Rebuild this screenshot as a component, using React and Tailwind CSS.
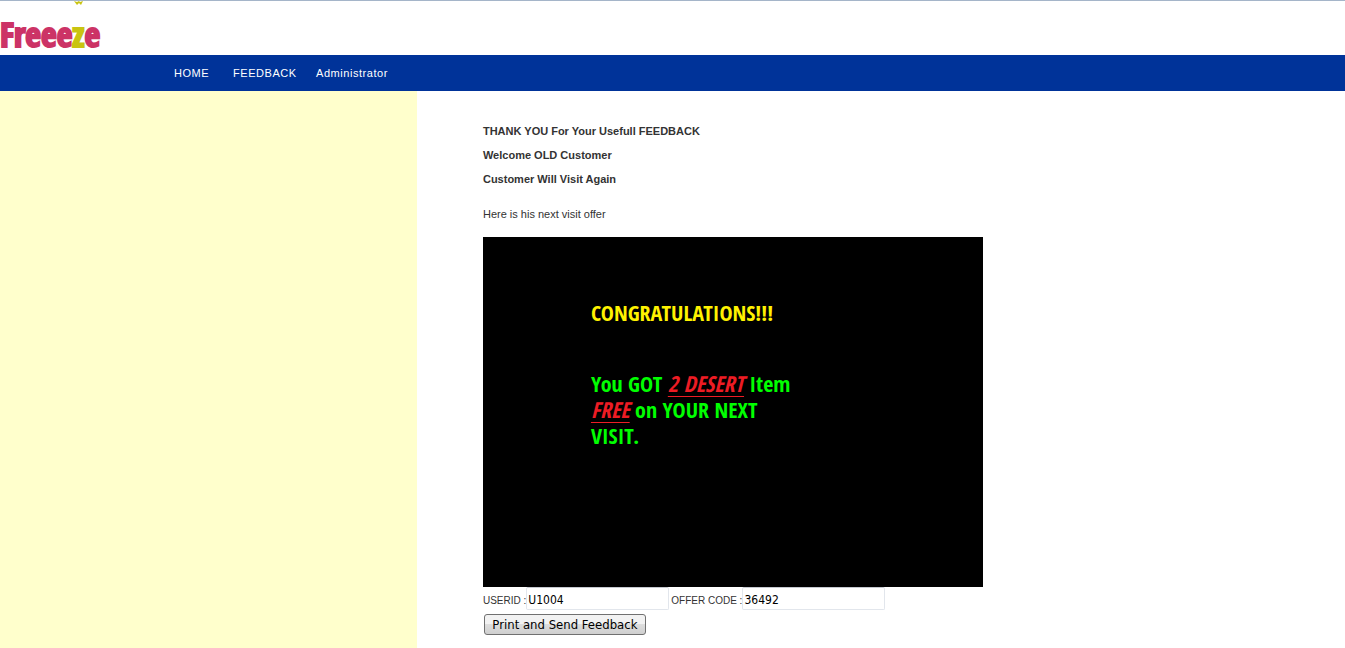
const navItems = [
  { label: 'HOME', className: 'w-[59px]' },
  { label: 'FEEDBACK', className: 'w-[83px]' },
  { label: 'Administrator', className: '' },
];

function Logo() {
  return (
    <svg width="110" height="54" viewBox="0 0 110 54" role="img" aria-label="Freeeze" className="block overflow-visible">
      <text
        x="0"
        y="46"
        fontFamily="'Open Sans Condensed', 'Roboto Condensed', sans-serif"
        fontWeight="700"
        fontSize="34"
        fill="#cc3366"
        stroke="#cc3366"
        strokeWidth="2"
      >
        Freee<tspan fill="#c9c411" stroke="#c9c411">z</tspan>e
      </text>
      <path d="M74 0l3 4 2-2 2 2 2-4-3 1-1-1-2 1z" fill="#c9c411" />
    </svg>
  );
}

function OfferBanner() {
  return (
    <section className="h-[350px] w-[500px] bg-black pl-[108px] pt-[62px] font-['Open_Sans_Condensed','Roboto_Condensed',sans-serif] text-[22px] font-bold leading-[26px] text-[#00ff00]">
      <h2 className="mb-[45px] text-[#fff200]">CONGRATULATIONS!!!</h2>
      <p>
        You GOT <em className="text-[#ed1c24] underline decoration-1 underline-offset-4">2 DESERT</em> Item
        <br />
        <em className="text-[#ed1c24] underline decoration-1 underline-offset-4">FREE</em> on YOUR NEXT
        <br />
        VISIT.
      </p>
    </section>
  );
}

function Field({ id, label, value }) {
  return (
    <div className="flex items-baseline">
      <label htmlFor={id} className="whitespace-nowrap text-[10px]">{label}</label>
      <input
        id={id}
        defaultValue={value}
        className="h-[23px] w-[143px] rounded-xs border border-[#e2e6ec] border-t-[#c5c8cf] bg-white px-px pt-0.5 font-['DejaVu_Sans_Condensed','DejaVu_Sans',sans-serif] text-xs text-black"
      />
    </div>
  );
}

export default function App() {
  return (
    <div className="flex min-h-screen flex-col bg-white font-['Liberation_Sans',Arial,sans-serif] text-[11px] text-[#333333]">
      <header className="h-[55px] border-t border-[#a5b5c9]">
        <Logo />
      </header>
      <nav className="flex h-9 items-center bg-[#003399] pl-[174px] text-[11px] tracking-wider text-white">
        {navItems.map((item) => (
          <a key={item.label} href="#" className={item.className}>
            {item.label}
          </a>
        ))}
      </nav>
      <div className="flex grow">
        <aside className="w-[31%] shrink-0 bg-[#ffffcc]" />
        <main className="pl-[66px] pt-7">
          <div className="font-bold leading-6">
            <p>THANK YOU For Your Usefull FEEDBACK</p>
            <p>Welcome OLD Customer</p>
            <p>Customer Will Visit Again</p>
          </div>
          <p className="mb-[11px] mt-[11px] leading-6">Here is his next visit offer</p>
          <OfferBanner />
          <form onSubmit={(event) => event.preventDefault()}>
            <div className="flex gap-0.5">
              <Field id="userid" label="USERID :" value="U1004" />
              <Field id="offer-code" label="OFFER CODE :" value="36492" />
            </div>
            <button
              type="submit"
              className="ml-px mt-1 h-[21px] w-[162px] rounded-[3px] border border-[#707070] bg-linear-to-b from-[#f2f2f2] from-50% via-[#dddddd] via-50% to-[#cfcfcf] font-['DejaVu_Sans_Condensed','DejaVu_Sans',sans-serif] text-[13px] leading-none text-black"
            >
              Print and Send Feedback
            </button>
          </form>
        </main>
      </div>
    </div>
  );
}
